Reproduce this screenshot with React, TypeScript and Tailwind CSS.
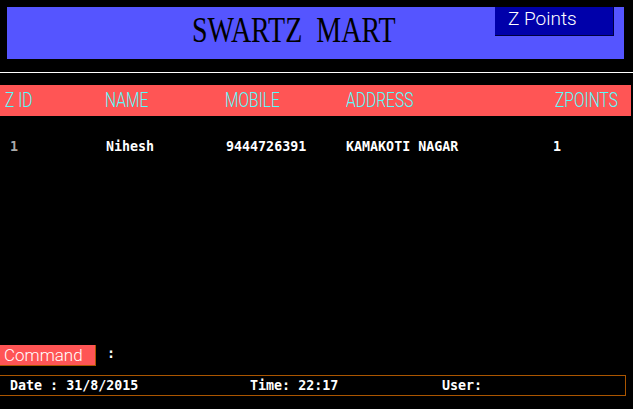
import React from "react";

const mono = { fontFamily: '"DejaVu Sans Mono", "Liberation Mono", monospace' };
const light = { fontFamily: 'Roboto, "Liberation Sans", Arial, sans-serif', fontWeight: 300 };
const serif = { fontFamily: '"Liberation Serif", "Times New Roman", serif' };

function H({ children, w }: { children: React.ReactNode; w?: string }) {
  return (
    <div className={`${w ?? ""} shrink-0`}>
      <span className="inline-block origin-left scale-x-[0.8] whitespace-pre" style={light}>
        {children}
      </span>
    </div>
  );
}

export default function App() {
  return (
    <div className="w-[633px] h-[409px] bg-black overflow-hidden flex flex-col pt-[7px]">
      {/* title bar */}
      <div className="relative ml-[7px] w-[617px] h-[52px] shrink-0 bg-[#5555FF] pt-[6px] pl-[185px]">
        <span
          className="inline-block origin-left scale-x-[0.8] whitespace-pre text-[35px] leading-[35px] text-black"
          style={serif}
        >
          SWARTZ  MART
        </span>
        <div
          className="absolute left-[488px] top-0 w-[119px] h-[29px] bg-[#0000AA] border-b border-r border-[#000040] pl-[13px] pt-[2px] text-white text-[19px] leading-[20px]"
          style={light}
        >
          Z Points
        </div>
      </div>

      {/* white rule */}
      <div className="mt-[13px] h-px w-full bg-white shrink-0" />

      {/* header bar */}
      <div className="mt-[12px] h-[31px] w-[631px] shrink-0 bg-[#FF5555] flex pl-[5px] text-[#55FFFF] text-[19.5px] leading-[29px]">
        <H w="w-[100px]">Z ID</H>
        <H w="w-[120px]">NAME</H>
        <H w="w-[121px]">MOBILE</H>
        <H w="w-[209px]">ADDRESS</H>
        <H>ZPOINTS</H>
      </div>

      {/* data row */}
      <div className="mt-[23px] flex pl-[10px] font-bold text-[13.33px] leading-[16px] text-white shrink-0" style={mono}>
        <div className="w-[96px] text-[#AAAAAA]">1</div>
        <div className="w-[120px]">Nihesh</div>
        <div className="w-[120px]">9444726391</div>
        <div className="w-[207px]">KAMAKOTI NAGAR</div>
        <div>1</div>
      </div>

      {/* command line */}
      <div className="mt-[190px] flex items-start shrink-0">
        <div
          className="w-[96px] h-[21px] bg-[#FF5555] border-b border-r border-[#AA5500] pl-[4px] text-white text-[17px] leading-[20px]"
          style={light}
        >
          Command
        </div>
        <div className="ml-[11px] pt-[1px] font-bold text-[13.33px] leading-[16px] text-white" style={mono}>
          :
        </div>
      </div>

      {/* status bar */}
      <div
        className="mt-[9px] w-[626px] h-[21px] shrink-0 border-t border-b border-r border-[#AA5500] flex pl-[10px] pt-[2px] font-bold text-[13.33px] leading-[16px] text-white whitespace-pre"
        style={mono}
      >
        <div className="w-[240px]">Date : 31/8/2015</div>
        <div className="w-[192px]">Time: 22:17</div>
        <div>User:</div>
      </div>
    </div>
  );
}
